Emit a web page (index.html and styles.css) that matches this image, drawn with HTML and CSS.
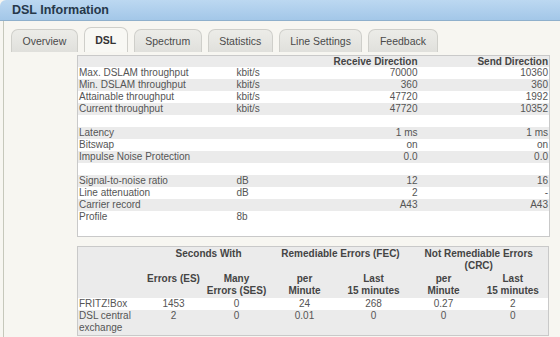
FILE: index.html
```html
<!DOCTYPE html>
<html lang="en">
<head>
    <meta charset="UTF-8">
    <title>DSL Information</title>
    <link rel="stylesheet" href="styles.css">
</head>
<body>

    <div class="titlebar">DSL Information</div>

    <div class="frame">
        <ul class="tabs">
            <li>Overview</li>
            <li class="active">DSL</li>
            <li>Spectrum</li>
            <li>Statistics</li>
            <li>Line Settings</li>
            <li>Feedback</li>
        </ul>

        <table class="dsl">
            <colgroup>
                <col class="c-label">
                <col class="c-unit">
                <col class="c-recv">
                <col class="c-send">
            </colgroup>
            <tr class="head">
                <th></th><th></th><th>Receive Direction</th><th>Send Direction</th>
            </tr>
            <tr><td>Max. DSLAM throughput</td><td>kbit/s</td><td>70000</td><td>10360</td></tr>
            <tr><td>Min. DSLAM throughput</td><td>kbit/s</td><td>360</td><td>360</td></tr>
            <tr><td>Attainable throughput</td><td>kbit/s</td><td>47720</td><td>1992</td></tr>
            <tr><td>Current throughput</td><td>kbit/s</td><td>47720</td><td>10352</td></tr>
            <tr class="blank"><td colspan="4"></td></tr>
            <tr><td>Latency</td><td></td><td>1 ms</td><td>1 ms</td></tr>
            <tr><td>Bitswap</td><td></td><td>on</td><td>on</td></tr>
            <tr><td>Impulse Noise Protection</td><td></td><td>0.0</td><td>0.0</td></tr>
            <tr class="blank"><td colspan="4"></td></tr>
            <tr><td>Signal-to-noise ratio</td><td>dB</td><td>12</td><td>16</td></tr>
            <tr><td>Line attenuation</td><td>dB</td><td>2</td><td>-</td></tr>
            <tr><td>Carrier record</td><td></td><td>A43</td><td>A43</td></tr>
            <tr><td>Profile</td><td>8b</td><td></td><td></td></tr>
            <tr class="tail"><td colspan="4"></td></tr>
        </table>

        <table class="errors">
            <colgroup>
                <col class="e-label">
                <col class="e-es">
                <col class="e-ses">
                <col class="e-fpm">
                <col class="e-f15">
                <col class="e-cpm">
                <col class="e-c15">
            </colgroup>
            <tr class="head">
                <th></th>
                <th colspan="2">Seconds With</th>
                <th colspan="2">Remediable Errors (FEC)</th>
                <th colspan="2">Not Remediable Errors (CRC)</th>
            </tr>
            <tr class="head">
                <th></th>
                <th>Errors (ES)</th>
                <th>Many<br>Errors (SES)</th>
                <th>per<br>Minute</th>
                <th>Last<br>15 minutes</th>
                <th>per<br>Minute</th>
                <th>Last<br>15 minutes</th>
            </tr>
            <tr class="light">
                <td>FRITZ!Box</td><td>1453</td><td>0</td><td>24</td><td>268</td><td>0.27</td><td>2</td>
            </tr>
            <tr>
                <td>DSL central exchange</td><td>2</td><td>0</td><td>0.01</td><td>0</td><td>0</td><td>0</td>
            </tr>
        </table>

        <div class="bottom-line"></div>
    </div>

</body>
</html>
```

FILE: styles.css
```css
body {
    margin: 0;
    padding: 0;
    background-color: #f7f6f1;
    font-family: 'Liberation Sans', Arial, sans-serif;
    color: #555;
}
.titlebar {
    height: 20px;
    line-height: 21px;
    padding-left: 12px;
    border-top-left-radius: 6px;
    border-bottom: 1px solid #8fb0cc;
    background: linear-gradient(#bcd8f1, #a3c7e8);
    color: #26384a;
    font-size: 12.5px;
    font-weight: bold;
}
.frame {
    margin-left: 3px;
    border-left: 1px solid #c6c8bb;
    padding-top: 7px;
    height: 316px;
}
.tabs {
    list-style: none;
    margin: 0 0 0 7px;
    padding: 0;
    display: flex;
    gap: 6px;
    align-items: flex-end;
    height: 24px;
}
.tabs li {
    height: 22px;
    line-height: 22px;
    padding: 0 10.5px;
    border: 1px solid #cfcfca;
    border-bottom: none;
    border-radius: 7px 7px 0 0;
    background: linear-gradient(#ecece8, #e0e0dc);
    color: #4a4a4a;
    font-size: 10.5px;
}
.tabs li.active {
    height: 24px;
    line-height: 25px;
    background: #f8f8f4;
    color: #333;
    font-weight: bold;
}
table {
    border-collapse: collapse;
    table-layout: fixed;
    width: 472px;
    margin-left: 73px;
    font-size: 10px;
    border: 1px solid #c9c9c9;
}
td, th {
    padding: 0 1px;
    white-space: nowrap;
    overflow: hidden;
}
.dsl {
    margin-top: 3px;
}
.dsl tr {
    height: 12px;
    line-height: 12px;
}
.dsl tr:nth-child(odd) {
    background-color: #ebebeb;
}
.dsl tr:nth-child(even) {
    background-color: #fff;
}
.dsl tr.head {
    height: 11px;
    line-height: 11px;
}
.dsl tr.tail {
    height: 13px;
    background-color: #fff;
}
.dsl th {
    text-align: right;
    color: #444;
}
.dsl td:nth-child(3),
.dsl td:nth-child(4) {
    text-align: right;
}
.c-label { width: 158px; }
.c-unit { width: 90px; }
.c-recv { width: 93px; }
.c-send { width: 131px; }

.errors {
    margin-top: 9px;
    background-color: #ebebeb;
    line-height: 12.3px;
}
.errors th,
.errors td {
    vertical-align: top;
    text-align: center;
    white-space: normal;
}
.errors th {
    color: #444;
    padding-top: 1px;
}
.errors tr.head th {
    height: 24px;
}
.errors td:first-child {
    text-align: left;
}
.errors tr.light {
    background-color: #fff;
}
.e-label { width: 68px; }
.e-es { width: 56px; }
.e-ses { width: 70px; }
.e-fpm { width: 66px; }
.e-f15 { width: 72px; }
.e-cpm { width: 68px; }
.e-c15 { width: 71px; }

.bottom-line {
    margin-top: 3px;
    margin-left: 6px;
    height: 2px;
    background-color: #82948c;
}
```
